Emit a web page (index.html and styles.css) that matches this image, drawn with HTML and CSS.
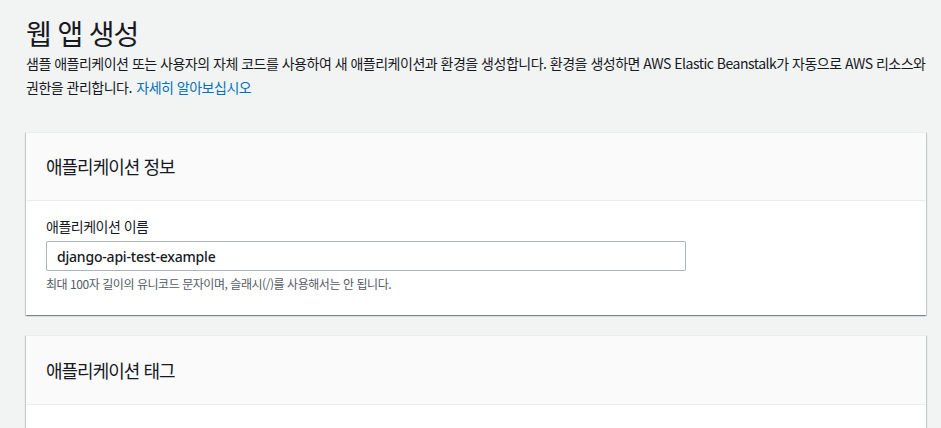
FILE: index.html
```html
<!DOCTYPE html>
<html lang="ko">
<head>
<meta charset="utf-8">
<title>웹 앱 생성</title>
<link rel="stylesheet" href="styles.css">
</head>
<body>
<main class="page">
  <h1 class="title">웹 앱 생성</h1>
  <p class="desc">샘플 애플리케이션 또는 사용자의 자체 코드를 사용하여 새 애플리케이션과 환경을 생성합니다. 환경을 생성하면 AWS Elastic Beanstalk가 자동으로 AWS 리소스와 <span class="desc-tail">권한을 관리합니다.</span> <a class="link" href="#">자세히 알아보십시오</a></p>

  <section class="card">
    <div class="card-header"><h2 class="card-title">애플리케이션 정보</h2></div>
    <div class="card-body">
      <label class="label" for="appname">애플리케이션 이름</label>
      <input class="input" id="appname" type="text" value="django-api-test-example">
      <div class="hint">최대 100자 길이의 유니코드 문자이며, 슬래시(/)를 사용해서는 안 됩니다.</div>
    </div>
  </section>

  <section class="card">
    <div class="card-header card-header-second"><h2 class="card-title">애플리케이션 태그</h2></div>
    <div class="card-body card-body-tall"></div>
  </section>
</main>
</body>
</html>
```

FILE: styles.css
```css
* { box-sizing: border-box; }

html, body {
  margin: 0;
  padding: 0;
  background: #f2f3f3;
}

body {
  font-family: "Noto Sans CJK KR", "Noto Sans", sans-serif;
  color: #16191f;
  font-feature-settings: "palt";
  overflow: hidden;
}

.page {
  padding: 13px 15px 0 26px;
}

.title {
  margin: 0;
  font-size: 28px;
  line-height: 40px;
  font-weight: 400;
  letter-spacing: -1.1px;
  color: #16191f;
}

.desc {
  margin: -2px 0 0;
  font-size: 14px;
  line-height: 24px;
  letter-spacing: -0.5px;
  color: #16191f;
}

.desc-tail {
  margin-right: 1px;
}

.link {
  color: #0073bb;
  text-decoration: none;
}

.card {
  background: #fff;
  border-top: 1px solid #eaeded;
  box-shadow: 0 1px 1px 0 rgba(0, 28, 36, 0.3),
              1px 1px 1px 0 rgba(0, 28, 36, 0.15),
              -1px 1px 1px 0 rgba(0, 28, 36, 0.15);
  margin-top: 33px;
}

.card + .card {
  margin-top: 20px;
}

.card-header {
  background: #fafafa;
  border-bottom: 1px solid #eaeded;
  padding: 20px 20px;
}

.card-header-second {
  padding-top: 21px;
}

.card-title {
  margin: 0;
  font-size: 18px;
  line-height: 27px;
  font-weight: 400;
  letter-spacing: -1px;
  color: #16191f;
}

.card-body {
  padding: 14px 20px 23px;
}

.card-body-tall {
  height: 60px;
}

.label {
  display: block;
  font-size: 14px;
  line-height: 22px;
  letter-spacing: -0.5px;
  margin-bottom: 4px;
  color: #16191f;
}

.input {
  display: block;
  width: 640px;
  height: 30px;
  border: 1px solid #aab7b8;
  border-radius: 2px;
  padding: 0 10px;
  font-family: "Noto Sans", "Noto Sans CJK KR", sans-serif;
  font-size: 14px;
  font-weight: 500;
  letter-spacing: -0.2px;
  color: #16191f;
  background: #fff;
  outline: none;
}

.hint {
  margin-top: 5px;
  font-size: 12px;
  line-height: 16px;
  letter-spacing: -0.45px;
  color: #545b64;
}
```
